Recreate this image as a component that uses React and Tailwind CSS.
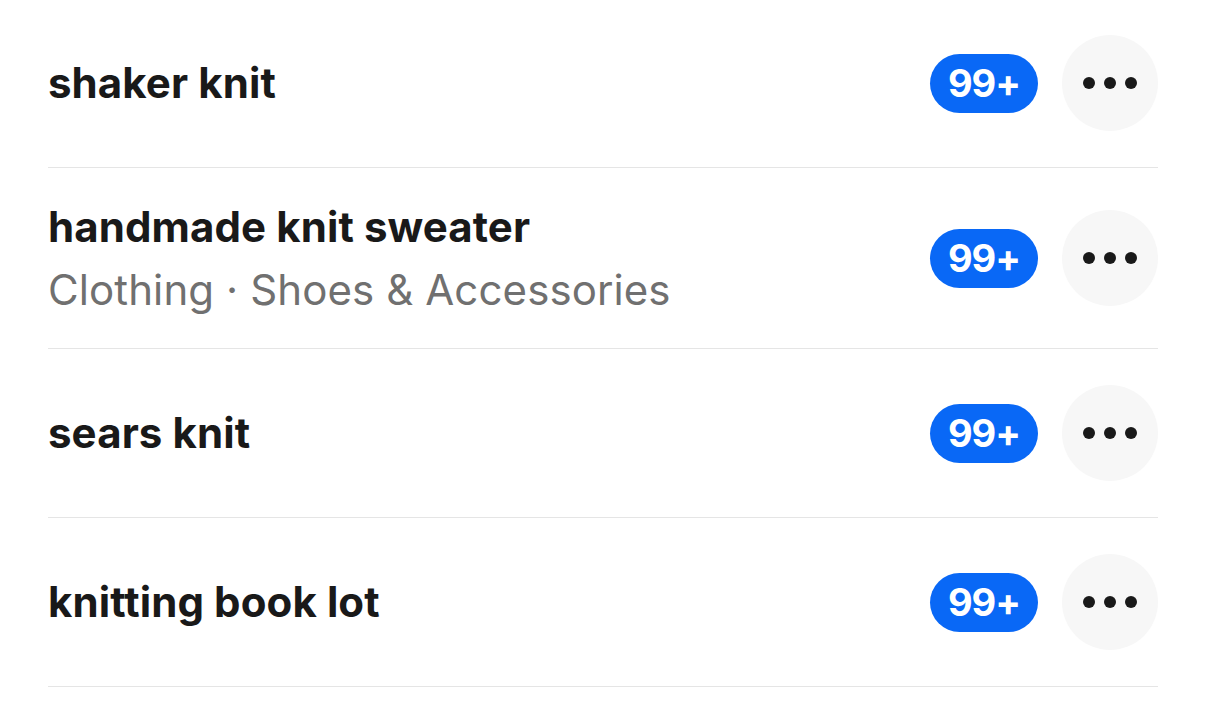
export default function App() {
  const rows = [
    { title: "shaker knit" },
    { title: "handmade knit sweater", sub: "Clothing · Shoes & Accessories" },
    { title: "sears knit" },
    { title: "knitting book lot" },
  ];
  return (
    <div className="w-[1206px] h-[701px] bg-white overflow-hidden px-12" style={{ fontFamily: "Inter, 'Noto Sans', sans-serif" }}>
      <div className="-mt-[1px]">
        {rows.map((r, i) => (
          <div key={i} className={`flex items-center border-b border-[#e5e5e5] ${r.sub ? "h-[181px]" : "h-[169px]"}`}>
            <div className="flex-1 min-w-0">
              <div className="text-[42px] leading-[52px] font-bold text-[#191919] tracking-[0.1px]">{r.title}</div>
              {r.sub && (
                <div className="text-[42px] leading-[52px] mt-[11px] text-[#707070] tracking-[0.1px]">{r.sub}</div>
              )}
            </div>
            <div className="flex items-center gap-6">
              <div className="h-[59px] w-[108px] rounded-full bg-[#0968f6] flex items-center justify-center text-white text-[38px] font-bold tracking-[-1px]">
                99+
              </div>
              <div className="h-[96px] w-[96px] rounded-full bg-[#f7f7f7] flex items-center justify-center gap-[9px]">
                <span className="w-[12px] h-[12px] rounded-full bg-[#191919]"></span>
                <span className="w-[12px] h-[12px] rounded-full bg-[#191919]"></span>
                <span className="w-[12px] h-[12px] rounded-full bg-[#191919]"></span>
              </div>
            </div>
          </div>
        ))}
      </div>
    </div>
  );
}
